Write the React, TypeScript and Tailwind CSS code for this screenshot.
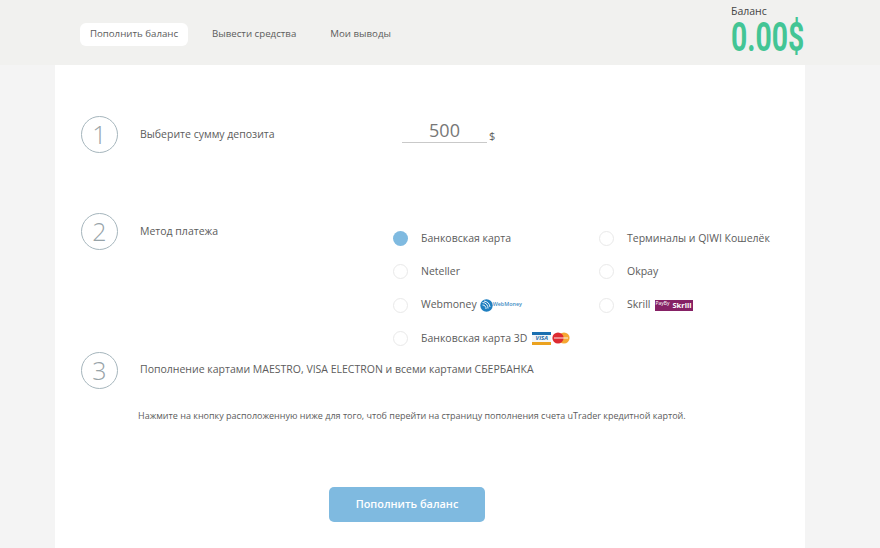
const methods = [
  { label: 'Банковская карта', active: true },
  { label: 'Терминалы и QIWI Кошелёк' },
  { label: 'Neteller' },
  { label: 'Okpay' },
  { label: 'Webmoney', logo: 'webmoney' },
  { label: 'Skrill', logo: 'skrill' },
  { label: 'Банковская карта 3D', logo: 'cards' },
];

function WebmoneyLogo() {
  return (
    <span className="ml-[3px] flex items-center">
      <svg width="13" height="13" viewBox="0 0 13 13">
        <circle cx="6.5" cy="6.5" r="6.2" fill="#1f7fc0" />
        <path d="M2.5 3.5 A5.5 5.5 0 0 1 8 9.5 M4 2 A7 7 0 0 1 10 8 M2.5 6 A3.5 3.5 0 0 1 6 10" fill="none" stroke="#fff" strokeWidth="0.9" />
      </svg>
      <span className="text-[5.4px] font-semibold leading-none text-[#3f8dc4]">WebMoney</span>
    </span>
  );
}

function SkrillLogo() {
  return (
    <span className="ml-[4px] flex h-[11px] w-[38px] items-center justify-between bg-[#862165] px-[1px] font-bold leading-none text-white">
      <span className="mb-[3px] text-[5px] font-normal">PayBy</span>
      <span className="mt-[1px] text-[7.5px]">Skrill</span>
    </span>
  );
}

function CardLogos() {
  return (
    <span className="ml-[5px] flex items-center gap-[1px]">
      <span className="flex h-[13px] w-[19px] flex-col">
        <span className="h-[3px] bg-[#1a6fb0]" />
        <span className="flex h-[7px] items-center justify-center bg-[#f4f6f8] text-[6px] font-bold italic leading-none text-[#2a6ea8]">
          VISA
        </span>
        <span className="h-[3px] bg-[#eba21f]" />
      </span>
      <svg width="18" height="12" viewBox="0 0 18 12">
        <circle cx="12" cy="6" r="5.6" fill="#f5a733" />
        <circle cx="6" cy="6" r="5.6" fill="#dd2a30" />
        <rect x="2" y="5" width="14" height="2" fill="#fff" opacity="0.45" />
      </svg>
    </span>
  );
}

function StepCircle({ n }: { n: number }) {
  return (
    <div className="flex h-[37px] w-[37px] shrink-0 items-center justify-center rounded-full border border-[#a6b6bd] text-[25px] font-light text-[#97a3a8]">
      {n}
    </div>
  );
}

export default function App() {
  return (
    <div className="h-screen overflow-hidden bg-[#f4f4f4] text-[#5c5c5c] [font-family:'Open_Sans',sans-serif]">
      {/* HEADER */}
      <header className="flex h-[65px] bg-[#f1f1ef]">
        <nav className="ml-[80px] mt-[23px] flex h-[23px] items-center text-[9.7px] text-[#5c5c5c]">
          <a className="flex h-full w-[108px] items-center justify-center rounded-md bg-white">Пополнить баланс</a>
          <a className="ml-[24px]">Вывести средства</a>
          <a className="ml-[34px]">Мои выводы</a>
        </nav>
        <div className="ml-auto w-[149px]">
          <p className="mt-[4px] text-[10.5px] leading-[14px] text-[#444]">Баланс</p>
          <p className="origin-left scale-x-[0.69] whitespace-nowrap text-[41px] font-bold leading-[39px] text-[#43c595] [font-family:Roboto,sans-serif]">
            0.00$
          </p>
        </div>
      </header>

      {/* MAIN */}
      <main className="mx-[55px] flex h-[483px] w-[750px] flex-col bg-white pl-[26px] pt-[51px]">
        <section className="flex h-[37px] items-center">
          <StepCircle n={1} />
          <p className="ml-[22px] w-[262px] text-[10.5px]">Выберите сумму депозита</p>
          <div className="mb-[10px] h-[27px] w-[85px] border-b border-[#c9c9c9] text-center text-[18px] leading-[29px] text-[#777]">
            500
          </div>
          <span className="ml-[2px] mt-[4px] text-[11px]">$</span>
        </section>

        <section className="mt-[60px] flex h-[139px]">
          <StepCircle n={2} />
          <p className="ml-[22px] mt-[11px] w-[253px] text-[10.5px] leading-[15px]">Метод платежа</p>
          <div className="mt-[9px] grid h-[133px] w-[412px] grid-cols-[206px_206px] grid-rows-4 text-[10.5px]">
            {methods.map((m) => (
              <div key={m.label} className="flex items-center">
                <span
                  className={
                    m.active
                      ? 'h-[15px] w-[15px] rounded-full bg-[#7fbae0]'
                      : 'h-[15px] w-[15px] rounded-full border border-[#e9e9e9]'
                  }
                />
                <span className="ml-[13px]">{m.label}</span>
                {m.logo === 'webmoney' && <WebmoneyLogo />}
                {m.logo === 'skrill' && <SkrillLogo />}
                {m.logo === 'cards' && <CardLogos />}
              </div>
            ))}
          </div>
        </section>

        <section className="flex h-[37px] items-center">
          <StepCircle n={3} />
          <p className="mb-[2px] ml-[22px] text-[10.5px]">
            Пополнение картами MAESTRO, VISA ELECTRON и всеми картами СБЕРБАНКА
          </p>
        </section>

        <p className="ml-[57px] mt-[20px] text-[9px] leading-[14px]">
          Нажмите на кнопку расположенную ниже для того, чтоб перейти на страницу пополнения счета uTrader кредитной картой.
        </p>

        <button className="ml-[248px] mt-[64px] h-[35px] w-[156px] rounded-[5px] bg-[#7fbae0] text-[10.9px] font-semibold text-white">
          Пополнить баланс
        </button>
      </main>
    </div>
  );
}
